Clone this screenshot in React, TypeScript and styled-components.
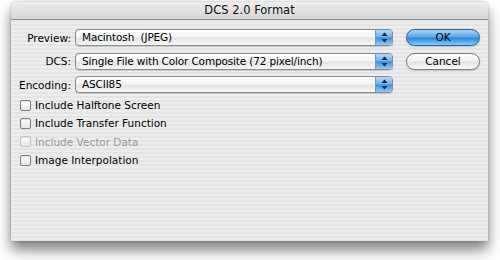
import React from 'react'
import styled, { createGlobalStyle } from 'styled-components'

const Global = createGlobalStyle`
  *, *::before, *::after {
    box-sizing: border-box;
  }
  html, body {
    margin: 0;
    background: #ffffff;
  }
  body {
    font-family: "DejaVu Sans", "Liberation Sans", sans-serif;
    width: 500px;
    height: 260px;
    overflow: hidden;
  }
`

const popups = [
  { label: 'Preview:', value: 'Macintosh  (JPEG)' },
  { label: 'DCS:', value: 'Single File with Color Composite (72 pixel/inch)' },
  { label: 'Encoding:', value: 'ASCII85' },
]

const checks = [
  { label: 'Include Halftone Screen', disabled: false },
  { label: 'Include Transfer Function', disabled: false },
  { label: 'Include Vector Data', disabled: true },
  { label: 'Image Interpolation', disabled: false },
]

const Stepper = () => (
  <Arrows>
    <svg width="7" height="11" viewBox="0 0 7 11">
      <path d="M3.5 0.5 L6.5 4 L0.5 4 Z" fill="#10253f" />
      <path d="M3.5 10.5 L6.5 7 L0.5 7 Z" fill="#10253f" />
    </svg>
  </Arrows>
)

const App = () => {
  return (
    <>
      <Global />
      <Page>
        <Window>
          <TitleBar>DCS 2.0 Format</TitleBar>
          <Body>
            <Form>
              <Popups>
                {popups.map((p) => (
                  <Row key={p.label}>
                    <Label>{p.label}</Label>
                    <Popup>
                      <PopupText>{p.value}</PopupText>
                      <Stepper />
                    </Popup>
                  </Row>
                ))}
              </Popups>
              <Checks>
                {checks.map((c) => (
                  <CheckRow key={c.label} $disabled={c.disabled}>
                    <Box $disabled={c.disabled} />
                    {c.label}
                  </CheckRow>
                ))}
              </Checks>
            </Form>
            <Buttons>
              <Button $primary>OK</Button>
              <Button>Cancel</Button>
            </Buttons>
          </Body>
        </Window>
      </Page>
    </>
  )
}

export default App

const Page = styled.div`
  width: 500px;
  height: 260px;
  padding: 2px 0 0 11px;
`

const Window = styled.div`
  width: 477px;
  height: 239px;
  border-radius: 5px 5px 0 0;
  overflow: hidden;
  box-shadow: 0 9px 14px rgba(0, 0, 0, 0.5), 0 0 3px rgba(0, 0, 0, 0.25);
  background: repeating-linear-gradient(
    to bottom,
    #ededed 0px,
    #ededed 2px,
    #e4e4e4 2px,
    #e4e4e4 4px
  );
  display: flex;
  flex-direction: column;
`

const TitleBar = styled.div`
  height: 18px;
  flex-shrink: 0;
  background: linear-gradient(to bottom, #ededed, #d6d6d6);
  border-bottom: 1px solid #8e8e8e;
  font-size: 11.5px;
  line-height: 17px;
  color: #111;
  text-align: center;
`

const Body = styled.div`
  display: flex;
  padding: 9px 8px 0 0;
  gap: 13px;
`

const Form = styled.div`
  display: flex;
  flex-direction: column;
  gap: 3px;
`

const Popups = styled.div`
  display: flex;
  flex-direction: column;
  gap: 6.5px;
`

const Row = styled.div`
  display: grid;
  grid-template-columns: 60px 318px;
  column-gap: 4px;
  align-items: center;
`

const Label = styled.div`
  font-size: 10.5px;
  color: #000;
  text-align: right;
`

const Popup = styled.div`
  height: 17px;
  display: flex;
  border: 1px solid #8a8a8a;
  border-radius: 4px;
  overflow: hidden;
  background: linear-gradient(to bottom, #ffffff 0%, #f4f4f4 45%, #e4e4e4 55%, #f6f6f6 100%);
  box-shadow: 0 1px 1px rgba(0, 0, 0, 0.15);
`

const PopupText = styled.div`
  flex: 1;
  padding-left: 6px;
  font-size: 10.5px;
  letter-spacing: -0.15px;
  line-height: 15px;
  color: #000;
  white-space: pre;
`

const Arrows = styled.div`
  width: 17px;
  display: flex;
  align-items: center;
  justify-content: center;
  border-left: 1px solid #7896b8;
  background: linear-gradient(to bottom, #b3daf8 0%, #6cb2ec 45%, #3f92e0 55%, #86cffa 100%);
`

const Checks = styled.div`
  display: flex;
  flex-direction: column;
  padding-left: 9px;
`

const CheckRow = styled.div<{ $disabled?: boolean }>`
  height: 18.3px;
  display: flex;
  align-items: center;
  gap: 4px;
  font-size: 10.5px;
  color: ${(p) => (p.$disabled ? '#9a9a9a' : '#000')};
`

const Box = styled.div<{ $disabled?: boolean }>`
  width: 11px;
  height: 11px;
  border: 1px solid ${(p) => (p.$disabled ? '#c4c4c4' : '#7d7d7d')};
  border-radius: 2px;
  background: linear-gradient(to bottom, #ffffff, #e6e6e6);
  box-shadow: inset 0 1px 1px rgba(0, 0, 0, 0.12);
`

const Buttons = styled.div`
  display: flex;
  flex-direction: column;
  gap: 6.5px;
`

const Button = styled.div<{ $primary?: boolean }>`
  width: 74px;
  height: 17px;
  border-radius: 9px;
  font-size: 10.5px;
  line-height: 15px;
  text-align: center;
  color: #000;
  border: 1px solid ${(p) => (p.$primary ? '#2a5d9a' : '#7a7a7a')};
  background: ${(p) =>
    p.$primary
      ? 'linear-gradient(to bottom, #a8d4f6 0%, #5aa8ea 45%, #2f86dc 55%, #7fd0fb 100%)'
      : 'linear-gradient(to bottom, #ffffff 0%, #f2f2f2 45%, #e2e2e2 55%, #fafafa 100%)'};
  box-shadow: 0 1px 2px rgba(0, 0, 0, 0.2);
`
